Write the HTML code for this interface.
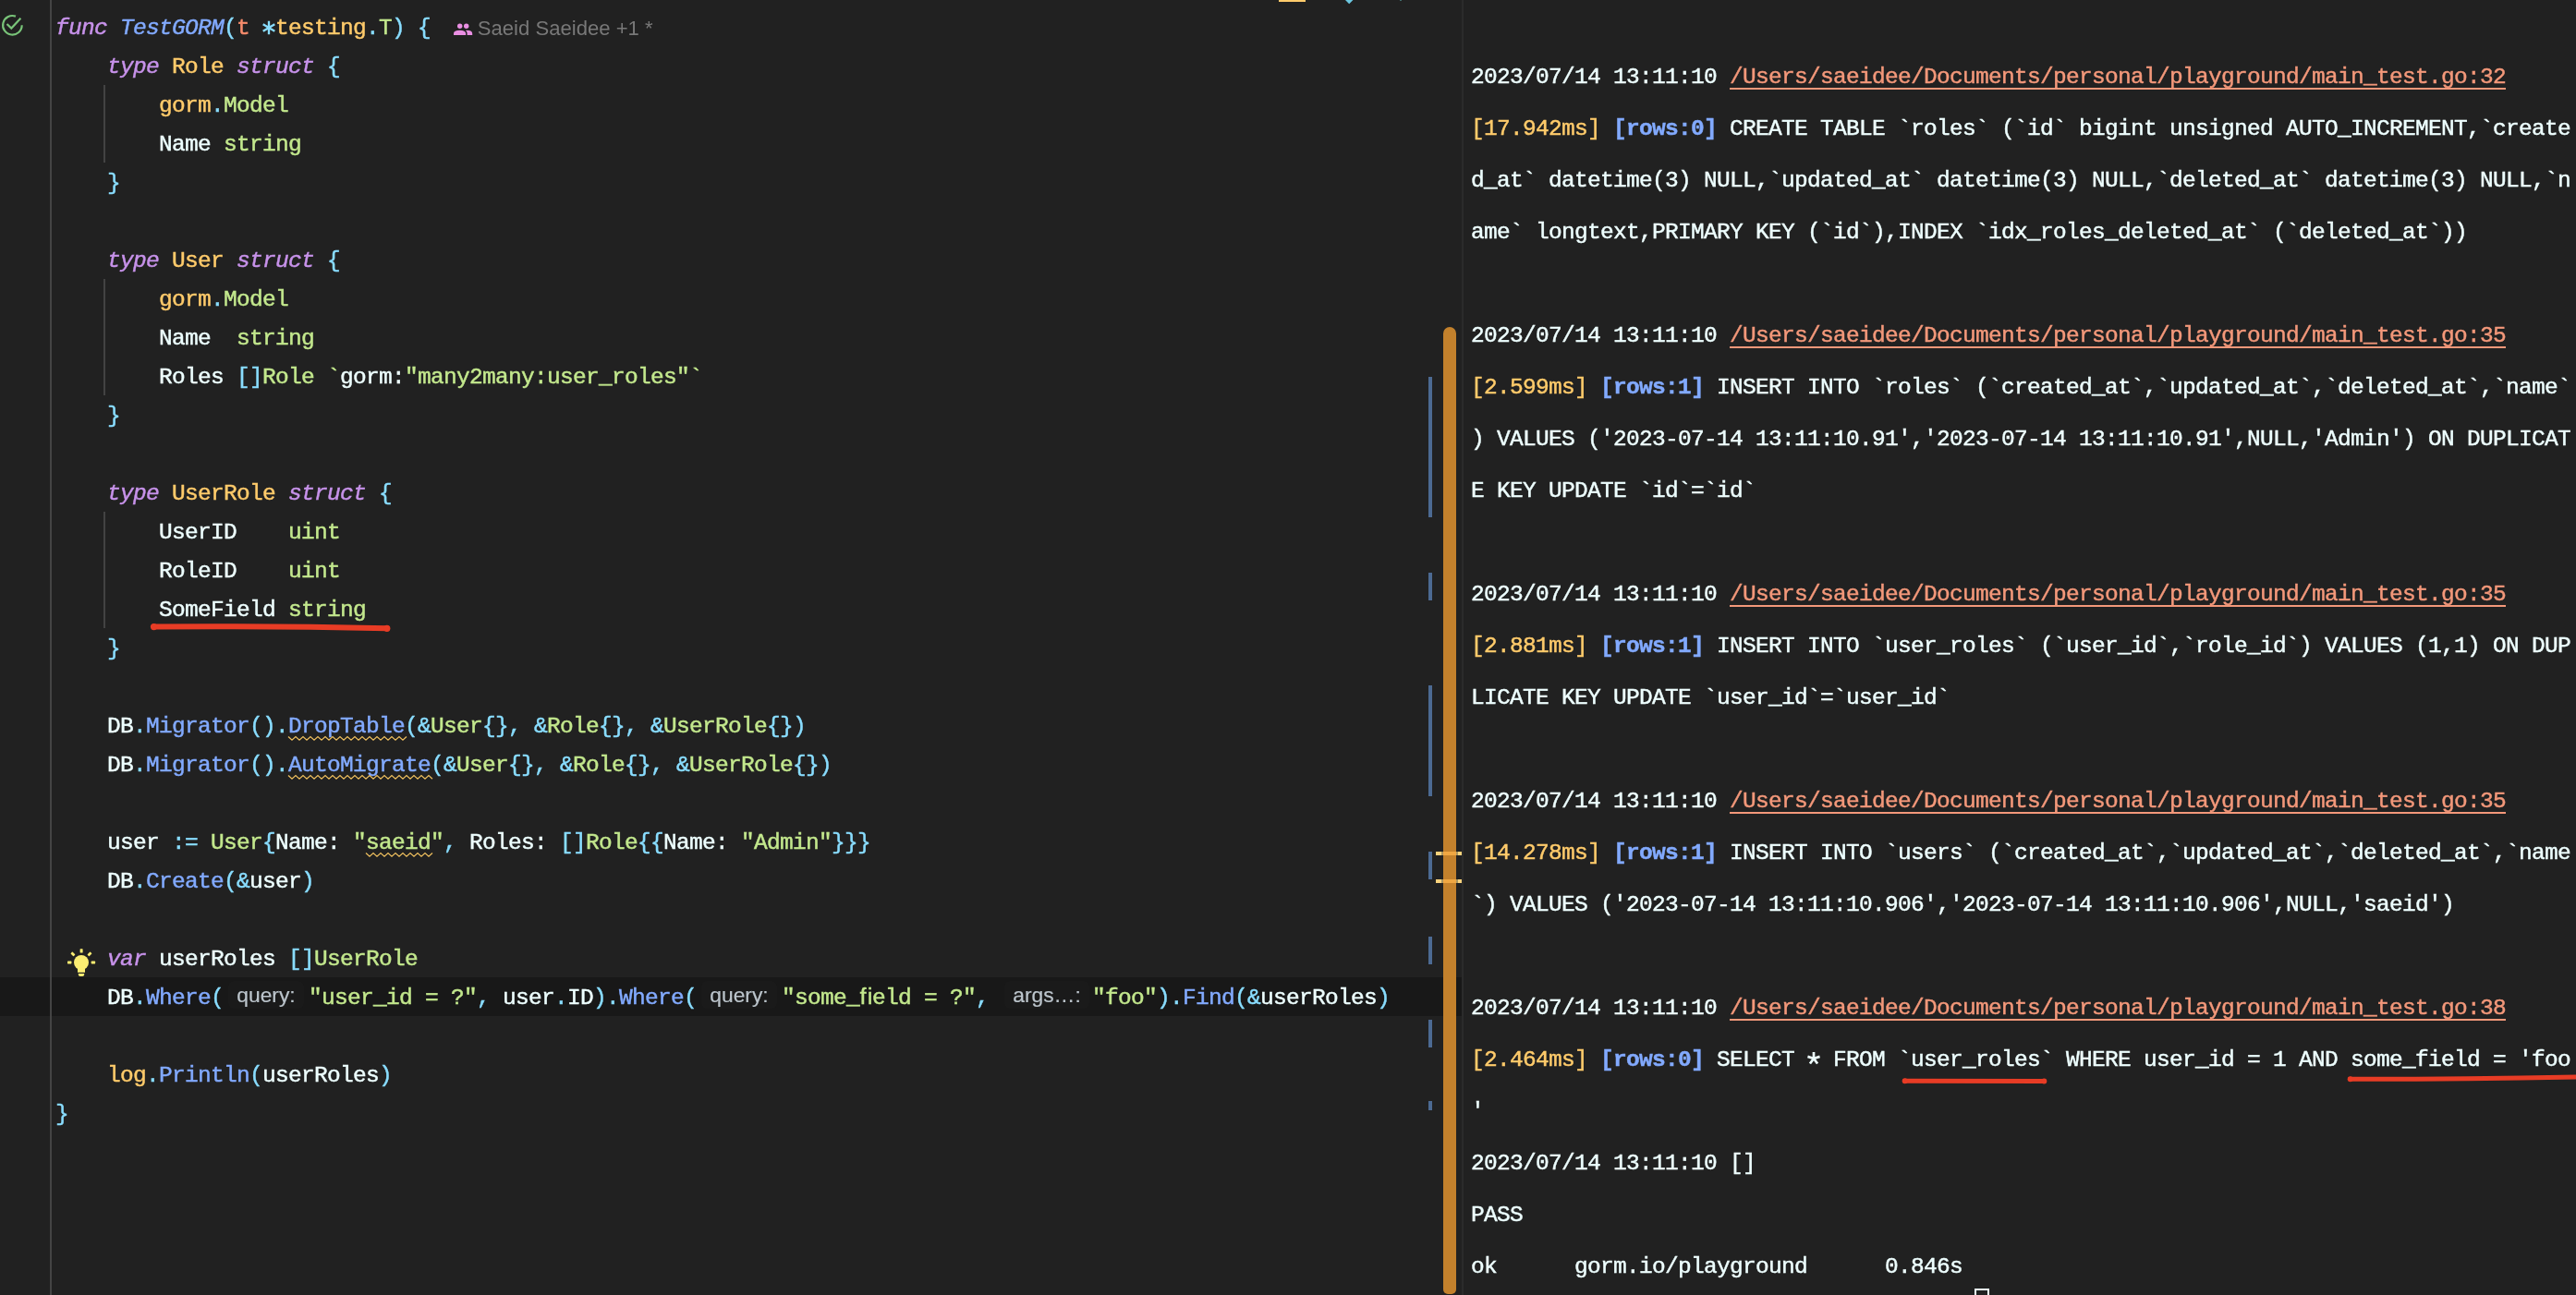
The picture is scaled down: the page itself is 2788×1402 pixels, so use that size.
<!DOCTYPE html>
<html><head><meta charset="utf-8"><title>GoLand</title>
<style>
html,body{margin:0;padding:0;background:#212121;}
body{width:2788px;height:1402px;overflow:hidden;position:relative;font-family:"Liberation Mono",monospace;color:#EEFFFF;}
#w{position:absolute;left:0;top:0;width:2788px;height:1402px;overflow:hidden;will-change:transform;}
.a{position:absolute;}
.e{position:absolute;left:60.0px;height:42px;line-height:42px;font-size:24.5px;letter-spacing:-0.7024px;white-space:pre;}
.t{position:absolute;left:1592.0px;height:56px;line-height:56px;font-size:24.5px;letter-spacing:-0.7024px;white-space:pre;}
.k{color:#C792EA}.f{color:#82AAFF}.t2{color:#FFCB6B}.g{color:#C3E88D}.p{color:#89DDFF}.o{color:#F78C6C}.w{color:#EEFFFF}
.au{font-family:"Liberation Sans",sans-serif;font-size:22.1px;line-height:30px;color:#787878;white-space:pre;}
.e,.t{-webkit-text-stroke:0.45px currentColor;}
.bs{left:1546px;width:4px;background:#4C6A93}
.ym{left:1554px;width:28px;height:4px;background:#F8D27C}
.ym b{position:absolute;left:8px;top:0;width:14px;height:4px;background:#F0A742}
.ym i{position:absolute;left:6px;top:0;width:2px;height:4px;background:#A8935F}
.as{display:inline-block;width:14px;height:1px;position:relative;letter-spacing:0;vertical-align:baseline}
.as svg{position:absolute;left:-1px;overflow:visible}
.i{font-style:italic}.b{font-weight:bold}
.lk{color:#F3987A;text-decoration:underline;text-decoration-thickness:2px;text-underline-offset:4.6px;}
.h{display:inline-block;height:30px;line-height:30px;vertical-align:middle;text-align:center;letter-spacing:0;font-family:"Liberation Sans",sans-serif;font-size:22.8px;color:#BCC5CC;position:relative;top:-3.6px;}
.h{-webkit-text-stroke:0.2px currentColor;}
.h b{font-weight:normal;display:inline-block;background:#1a1a1a;border-radius:6px;padding:0 9px;}
</style></head>
<body>
<div id="w">
<div class="a" style="left:0;top:1058px;width:1583px;height:42px;background:#181818"></div>
<div class="a" style="left:54px;top:0;width:2px;height:1402px;background:#444444"></div>
<div class="a" style="left:112px;top:91.9px;width:2px;height:84.0px;background:#434343"></div>
<div class="a" style="left:112px;top:301.9px;width:2px;height:126.0px;background:#434343"></div>
<div class="a" style="left:112px;top:553.9px;width:2px;height:126.0px;background:#434343"></div>
<div class="e" style="top:10.38px"><span class="k i">func</span><span class="w"> </span><span class="f i">TestGORM</span><span class="p">(</span><span class="o">t</span><span class="w"> </span><span class="as p"><svg style="top:-14.1px" width="16" height="16" viewBox="-8 -8 16 16"><path d="M0 -7.3V7.3M-6.3 -3.65L6.3 3.65M-6.3 3.65L6.3 -3.65" stroke="currentColor" stroke-width="2.35" fill="none"/></svg></span><span class="t2">testing</span><span class="p">.</span><span class="g">T</span><span class="p">)</span><span class="w"> </span><span class="p">{</span></div>
<div class="e" style="top:52.38px"><span class="w">    </span><span class="k i">type</span><span class="w"> </span><span class="t2">Role</span><span class="w"> </span><span class="k i">struct</span><span class="w"> </span><span class="p">{</span></div>
<div class="e" style="top:94.38px"><span class="w">        </span><span class="t2">gorm</span><span class="p">.</span><span class="g">Model</span></div>
<div class="e" style="top:136.38px"><span class="w">        Name </span><span class="g">string</span></div>
<div class="e" style="top:178.38px"><span class="w">    </span><span class="p">}</span></div>
<div class="e" style="top:262.38px"><span class="w">    </span><span class="k i">type</span><span class="w"> </span><span class="t2">User</span><span class="w"> </span><span class="k i">struct</span><span class="w"> </span><span class="p">{</span></div>
<div class="e" style="top:304.38px"><span class="w">        </span><span class="t2">gorm</span><span class="p">.</span><span class="g">Model</span></div>
<div class="e" style="top:346.38px"><span class="w">        Name  </span><span class="g">string</span></div>
<div class="e" style="top:388.38px"><span class="w">        Roles </span><span class="p">[]</span><span class="g">Role</span><span class="w"> </span><span class="g">`</span><span class="w">gorm:</span><span class="g">"many2many:user_roles"`</span></div>
<div class="e" style="top:430.38px"><span class="w">    </span><span class="p">}</span></div>
<div class="e" style="top:514.38px"><span class="w">    </span><span class="k i">type</span><span class="w"> </span><span class="t2">UserRole</span><span class="w"> </span><span class="k i">struct</span><span class="w"> </span><span class="p">{</span></div>
<div class="e" style="top:556.38px"><span class="w">        UserID    </span><span class="g">uint</span></div>
<div class="e" style="top:598.38px"><span class="w">        RoleID    </span><span class="g">uint</span></div>
<div class="e" style="top:640.38px"><span class="w">        SomeField </span><span class="g">string</span></div>
<div class="e" style="top:682.38px"><span class="w">    </span><span class="p">}</span></div>
<div class="e" style="top:766.38px"><span class="w">    DB</span><span class="p">.</span><span class="f">Migrator</span><span class="p">().</span><span class="sq"><span class="f">DropTable</span></span><span class="p">(</span><span class="p">&amp;</span><span class="g">User</span><span class="p">{}</span><span class="p">,</span><span class="w"> </span><span class="p">&amp;</span><span class="g">Role</span><span class="p">{}</span><span class="p">,</span><span class="w"> </span><span class="p">&amp;</span><span class="g">UserRole</span><span class="p">{}</span><span class="p">)</span></div>
<div class="e" style="top:808.38px"><span class="w">    DB</span><span class="p">.</span><span class="f">Migrator</span><span class="p">().</span><span class="sq"><span class="f">AutoMigrate</span></span><span class="p">(</span><span class="p">&amp;</span><span class="g">User</span><span class="p">{}</span><span class="p">,</span><span class="w"> </span><span class="p">&amp;</span><span class="g">Role</span><span class="p">{}</span><span class="p">,</span><span class="w"> </span><span class="p">&amp;</span><span class="g">UserRole</span><span class="p">{}</span><span class="p">)</span></div>
<div class="e" style="top:892.38px"><span class="w">    user </span><span class="p">:=</span><span class="w"> </span><span class="g">User</span><span class="p">{</span><span class="w">Name: </span><span class="g">"</span><span class="sq"><span class="g">saeid</span></span><span class="g">"</span><span class="p">,</span><span class="w"> Roles: </span><span class="p">[]</span><span class="g">Role</span><span class="p">{{</span><span class="w">Name: </span><span class="g">"Admin"</span><span class="p">}}}</span></div>
<div class="e" style="top:934.38px"><span class="w">    DB</span><span class="p">.</span><span class="f">Create</span><span class="p">(&amp;</span><span class="w">user</span><span class="p">)</span></div>
<div class="e" style="top:1018.38px"><span class="w">    </span><span class="k i">var</span><span class="w"> userRoles </span><span class="p">[]</span><span class="g">UserRole</span></div>
<div class="e" style="top:1060.38px"><span class="w">    DB</span><span class="p">.</span><span class="f">Where</span><span class="p">(</span><span class="h" style="width:92px"><b>query:</b></span><span class="g">"user_id = ?"</span><span class="p">,</span><span class="w"> user</span><span class="p">.</span><span class="w">ID</span><span class="p">).</span><span class="f">Where</span><span class="p">(</span><span class="h" style="width:92px"><b>query:</b></span><span class="g">"some_ﬁeld = ?"</span><span class="p">,</span><span class="w"> </span><span class="h" style="width:98px"><b>args…:</b></span><span class="g">"foo"</span><span class="p">).</span><span class="f">Find</span><span class="p">(&amp;</span><span class="w">userRoles</span><span class="p">)</span></div>
<div class="e" style="top:1144.38px"><span class="w">    </span><span class="t2">log</span><span class="p">.</span><span class="f">Println</span><span class="p">(</span><span class="w">userRoles</span><span class="p">)</span></div>
<div class="e" style="top:1186.38px"><span class="p">}</span></div>
<div class="t" style="top:55.98px"><span class="w">2023/07/14 13:11:10 </span><span class="lk">/Users/saeidee/Documents/personal/playground/main_test.go:32</span></div>
<div class="t" style="top:111.98px"><span class="t2">[17.942ms]</span><span class="w"> </span><span class="f b">[rows:0]</span><span class="w"> CREATE TABLE `roles` (`id` bigint unsigned AUTO_INCREMENT,`create</span></div>
<div class="t" style="top:167.98px"><span class="w">d_at` datetime(3) NULL,`updated_at` datetime(3) NULL,`deleted_at` datetime(3) NULL,`n</span></div>
<div class="t" style="top:223.98px"><span class="w">ame` longtext,PRIMARY KEY (`id`),INDEX `idx_roles_deleted_at` (`deleted_at`))</span></div>
<div class="t" style="top:335.98px"><span class="w">2023/07/14 13:11:10 </span><span class="lk">/Users/saeidee/Documents/personal/playground/main_test.go:35</span></div>
<div class="t" style="top:391.98px"><span class="t2">[2.599ms]</span><span class="w"> </span><span class="f b">[rows:1]</span><span class="w"> INSERT INTO `roles` (`created_at`,`updated_at`,`deleted_at`,`name`</span></div>
<div class="t" style="top:447.98px"><span class="w">) VALUES ('2023-07-14 13:11:10.91','2023-07-14 13:11:10.91',NULL,'Admin') ON DUPLICAT</span></div>
<div class="t" style="top:503.98px"><span class="w">E KEY UPDATE `id`=`id`</span></div>
<div class="t" style="top:615.98px"><span class="w">2023/07/14 13:11:10 </span><span class="lk">/Users/saeidee/Documents/personal/playground/main_test.go:35</span></div>
<div class="t" style="top:671.98px"><span class="t2">[2.881ms]</span><span class="w"> </span><span class="f b">[rows:1]</span><span class="w"> INSERT INTO `user_roles` (`user_id`,`role_id`) VALUES (1,1) ON DUP</span></div>
<div class="t" style="top:727.98px"><span class="w">LICATE KEY UPDATE `user_id`=`user_id`</span></div>
<div class="t" style="top:839.98px"><span class="w">2023/07/14 13:11:10 </span><span class="lk">/Users/saeidee/Documents/personal/playground/main_test.go:35</span></div>
<div class="t" style="top:895.98px"><span class="t2">[14.278ms]</span><span class="w"> </span><span class="f b">[rows:1]</span><span class="w"> INSERT INTO `users` (`created_at`,`updated_at`,`deleted_at`,`name</span></div>
<div class="t" style="top:951.98px"><span class="w">`) VALUES ('2023-07-14 13:11:10.906','2023-07-14 13:11:10.906',NULL,'saeid')</span></div>
<div class="t" style="top:1063.98px"><span class="w">2023/07/14 13:11:10 </span><span class="lk">/Users/saeidee/Documents/personal/playground/main_test.go:38</span></div>
<div class="t" style="top:1119.98px"><span class="t2">[2.464ms]</span><span class="w"> </span><span class="f b">[rows:0]</span><span class="w"> SELECT </span><span class="as w"><svg style="top:-15.3px" width="16" height="16" viewBox="-8 -8 16 16"><path d="M0 0L0.00 -6.90M0 0L6.56 -2.13M0 0L4.06 5.58M0 0L-4.06 5.58M0 0L-6.56 -2.13" stroke="currentColor" stroke-width="2.7" fill="none"/></svg></span><span class="w"> FROM `user_roles` WHERE user_id = 1 AND some_field = 'foo</span></div>
<div class="t" style="top:1175.98px"><span class="w">'</span></div>
<div class="t" style="top:1231.98px"><span class="w">2023/07/14 13:11:10 []</span></div>
<div class="t" style="top:1287.98px"><span class="w">PASS</span></div>
<div class="t" style="top:1343.98px"><span class="w">ok      gorm.io/playground      0.846s</span></div>
<!-- run-test gutter icon -->
<svg class="a" style="left:0;top:10px" width="40" height="36" viewBox="0 10 40 36">
  <path d="M16.92 17.62 A10.3 10.3 0 1 0 23.7 27.3" fill="none" stroke="#79C479" stroke-width="2.15"/>
  <path d="M7.5 25.9 L12.3 30.6 L22.4 19.8" fill="none" stroke="#79C479" stroke-width="2.15"/>
</svg>
<!-- author inlay -->
<svg class="a" style="left:488px;top:22px" width="26" height="18" viewBox="488 22 26 18">
  <g fill="#EA8FE3">
    <circle cx="497.7" cy="28.3" r="2.7"/>
    <circle cx="504.7" cy="28.3" r="2.7"/>
    <path d="M491 37.9 L491 36.2 Q491 32.7 497.6 32.7 Q504.1 32.7 504.1 36.2 L504.1 37.9 Z"/>
    <path d="M505.6 37.9 L505.6 36.2 Q505.6 34 503.9 32.8 Q511.2 32.4 511.2 36.4 L511.2 37.9 Z"/>
  </g>
</svg>
<div class="a au" id="author" style="left:516.8px;top:15.6px;">Saeid Saeidee +1 *</div>
<!-- intention bulb -->
<svg class="a" style="left:70px;top:1022px" width="38" height="38" viewBox="70 1022 38 38">
  <g fill="#FBED72">
    <circle cx="88" cy="1042" r="8"/>
    <rect x="84" y="1046" width="8" height="6.8"/>
    <path d="M84.8 1054 H91.2 V1055 Q91.2 1057 89.2 1057 H86.8 Q84.8 1057 84.8 1055 Z"/>
    <rect x="86.6" y="1027.2" width="3" height="4.3" rx="0.6"/>
    <rect x="73" y="1040.6" width="4.4" height="2.8" rx="0.6"/>
    <rect x="98.7" y="1040.6" width="4.4" height="2.8" rx="0.6"/>
    <rect x="76.7" y="1031.5" width="4.4" height="2.8" rx="0.6" transform="rotate(45 78.9 1032.9)"/>
    <rect x="94.8" y="1031.5" width="4.4" height="2.8" rx="0.6" transform="rotate(-45 97 1032.9)"/>
  </g>
</svg>
<!-- warning squiggles -->
<svg class="a" style="left:300px;top:790px" width="200" height="150" viewBox="300 790 200 150">
  <g fill="none" stroke="#EDBE5E" stroke-width="1.3" stroke-linejoin="miter">
    <path d="M312.0 797.6 L316.0 801.2 L320.0 797.6 L324.0 801.2 L328.0 797.6 L332.0 801.2 L336.0 797.6 L340.0 801.2 L344.0 797.6 L348.0 801.2 L352.0 797.6 L356.0 801.2 L360.0 797.6 L364.0 801.2 L368.0 797.6 L372.0 801.2 L376.0 797.6 L380.0 801.2 L384.0 797.6 L388.0 801.2 L392.0 797.6 L396.0 801.2 L400.0 797.6 L404.0 801.2 L408.0 797.6 L412.0 801.2 L416.0 797.6 L420.0 801.2 L424.0 797.6 L428.0 801.2 L432.0 797.6 L436.0 801.2 L440.0 797.6"/>
    <path d="M312.0 839.6 L316.0 843.2 L320.0 839.6 L324.0 843.2 L328.0 839.6 L332.0 843.2 L336.0 839.6 L340.0 843.2 L344.0 839.6 L348.0 843.2 L352.0 839.6 L356.0 843.2 L360.0 839.6 L364.0 843.2 L368.0 839.6 L372.0 843.2 L376.0 839.6 L380.0 843.2 L384.0 839.6 L388.0 843.2 L392.0 839.6 L396.0 843.2 L400.0 839.6 L404.0 843.2 L408.0 839.6 L412.0 843.2 L416.0 839.6 L420.0 843.2 L424.0 839.6 L428.0 843.2 L432.0 839.6 L436.0 843.2 L440.0 839.6 L444.0 843.2 L448.0 839.6 L452.0 843.2 L456.0 839.6 L460.0 843.2 L464.0 839.6 L468.0 843.2"/>
    <path d="M396.0 923.6 L400.0 927.2 L404.0 923.6 L408.0 927.2 L412.0 923.6 L416.0 927.2 L420.0 923.6 L424.0 927.2 L428.0 923.6 L432.0 927.2 L436.0 923.6 L440.0 927.2 L444.0 923.6 L448.0 927.2 L452.0 923.6 L456.0 927.2 L460.0 923.6 L464.0 927.2 L468.0 923.6"/>
  </g>
</svg>
<!-- hand-drawn red underlines -->
<svg class="a" style="left:150px;top:660px" width="300" height="40" viewBox="150 660 300 40">
  <path d="M166.5 678.6 Q290 677.6 419 680.3" fill="none" stroke="#E83C25" stroke-width="6" stroke-linecap="round"/>
  <circle cx="166.5" cy="678.6" r="3.6" fill="#E83C25"/><circle cx="418.8" cy="680.3" r="3.6" fill="#E83C25"/>
</svg>
<svg class="a" style="left:2040px;top:1150px" width="748" height="40" viewBox="2040 1150 748 40">
  <path d="M2061.5 1170.2 L2212.5 1170.4" fill="none" stroke="#E83C25" stroke-width="5" stroke-linecap="round"/>
  <circle cx="2061.7" cy="1170.2" r="3" fill="#E83C25"/><circle cx="2212.3" cy="1170.4" r="3" fill="#E83C25"/>
  <path d="M2543.5 1168.2 Q2660 1168.4 2792 1165.8" fill="none" stroke="#E83C25" stroke-width="5" stroke-linecap="round"/>
  <circle cx="2543.7" cy="1168.2" r="3" fill="#E83C25"/>
</svg>
<!-- error stripe / change markers -->
<div class="a bs" style="top:408px;height:152px"></div>
<div class="a bs" style="top:620px;height:30px"></div>
<div class="a bs" style="top:741.5px;height:120.5px"></div>
<div class="a bs" style="top:922px;height:30px"></div>
<div class="a bs" style="top:1013.5px;height:30px"></div>
<div class="a bs" style="top:1104px;height:30px"></div>
<div class="a bs" style="top:1192px;height:10px"></div>
<!-- scrollbar thumb -->
<div class="a" style="left:1562px;top:353.7px;width:14px;height:1047.5px;border-radius:7px 7px 5px 5px;background:#C3812C"></div>
<!-- yellow stripe marks -->
<div class="a ym" style="top:922px"><i></i><b></b><i style="left:22px"></i></div>
<div class="a ym" style="top:952px"><i></i><b></b><i style="left:22px"></i></div>
<!-- split divider -->
<div class="a" style="left:1582.3px;top:0;width:1.5px;height:1402px;background:#2b2b2b"></div>
<!-- top partial widgets -->
<div class="a" style="left:1383.5px;top:0;width:29px;height:2px;background:#FFCB6B"></div>
<svg class="a" style="left:1454px;top:0" width="12" height="6" viewBox="0 0 12 6"><path d="M2 0 L10.4 0 L6.2 4.2 Z" fill="#6CC7E0"/></svg>
<div class="a" style="left:1515px;top:0;width:2px;height:1px;background:#3f6c6c"></div>
<!-- terminal cursor -->
<div class="a" style="left:2137px;top:1395px;width:12px;height:12px;border:2.1px solid #EEFFFF"></div>

</div>
</body></html>
